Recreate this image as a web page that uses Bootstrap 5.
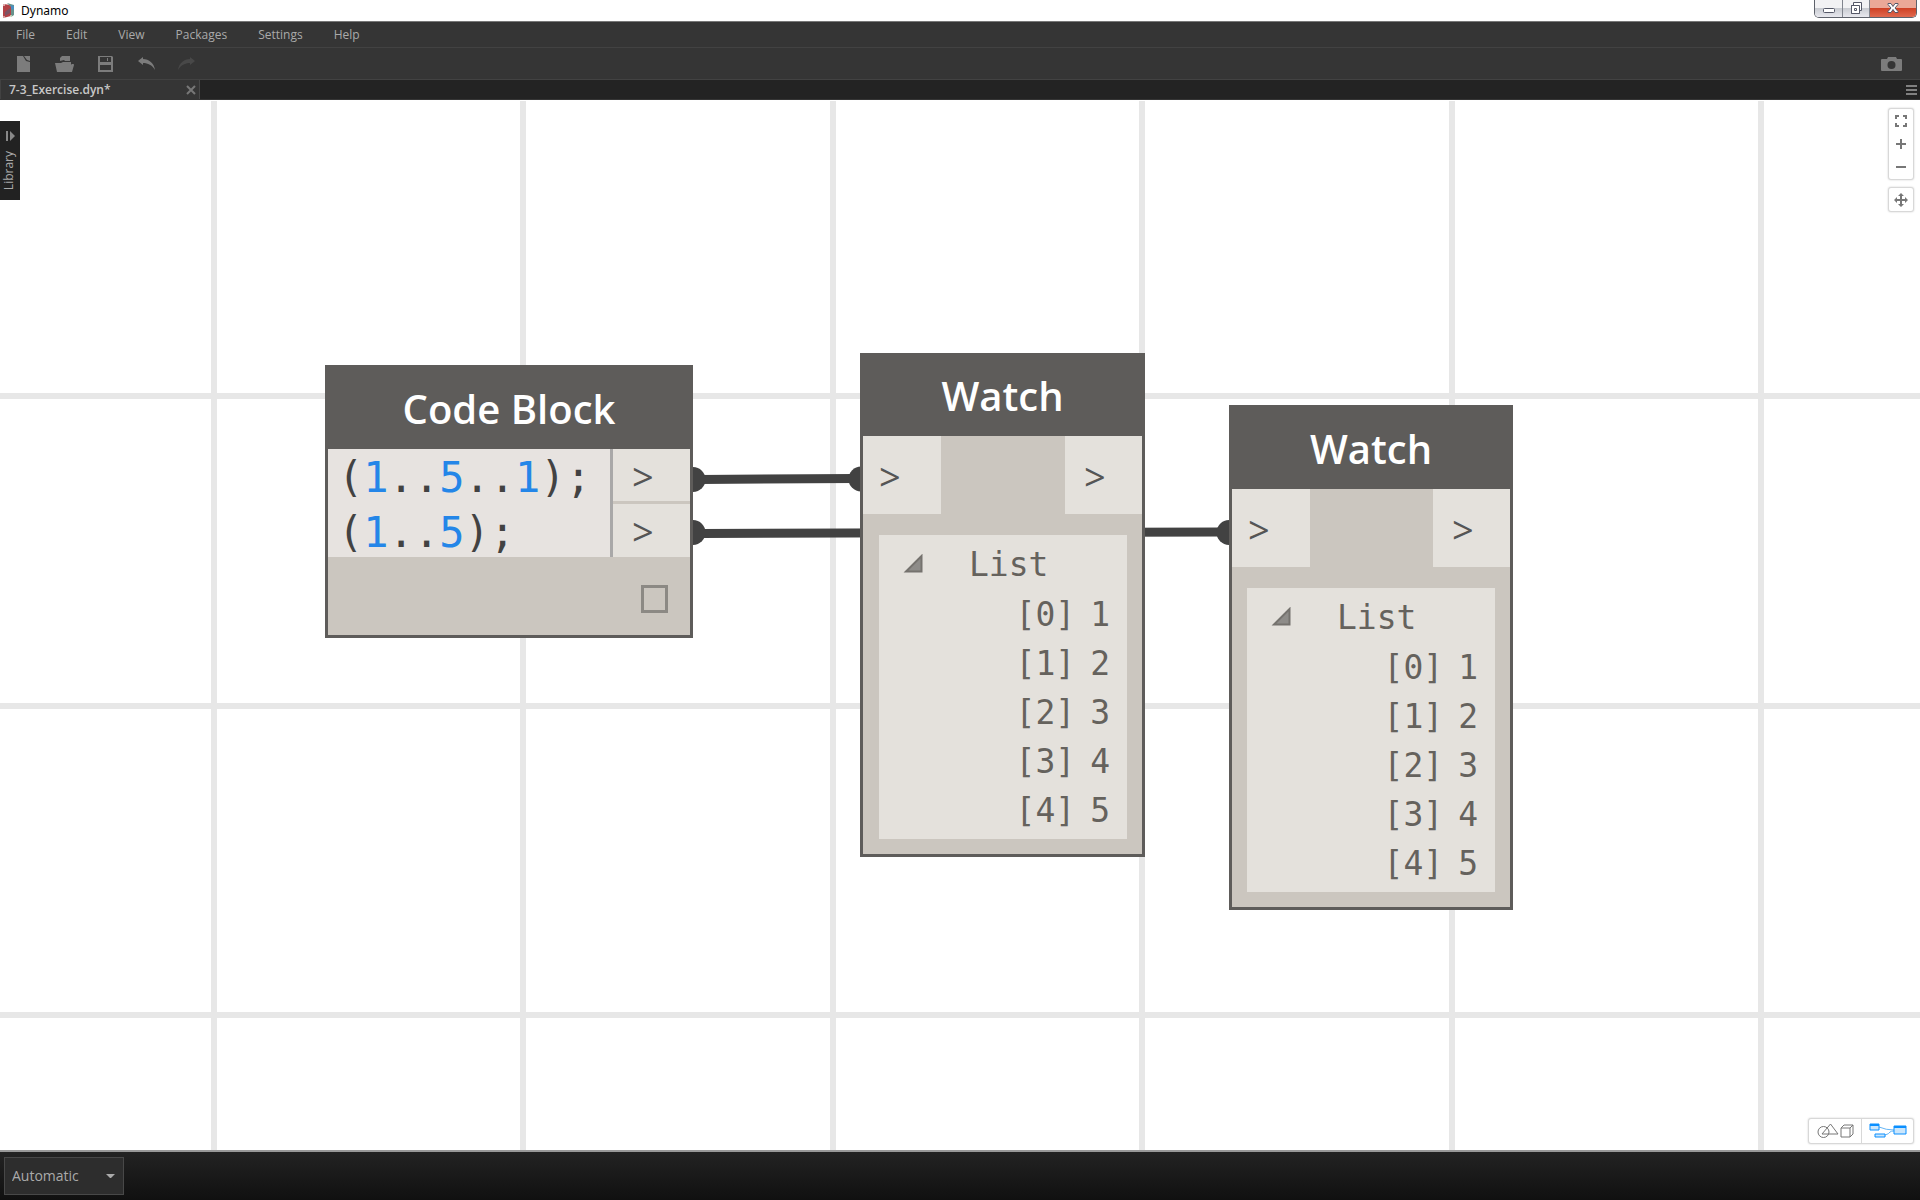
<!DOCTYPE html>
<html lang="en">
<head>
<meta charset="utf-8">
<meta name="viewport" content="width=device-width, initial-scale=1">
<title>Dynamo</title>
<link rel="stylesheet" href="https://cdn.jsdelivr.net/npm/bootstrap@5.3.0/dist/css/bootstrap.min.css">
<style>
body { font-family: "Open Sans", sans-serif; font-size: 12px; line-height: 16px; background: #fff; }
.app-title { height: 21px; font-family: "Noto Sans", sans-serif; color: #000; padding-left: 2px; }
.app-title h1 { font-size: 12px; line-height: 21px; }
.win-controls { height: 18px; margin-right: 3px; border: 1px solid #5e626b; border-top: 0; border-radius: 0 0 5px 5px; overflow: hidden; }
.win-controls button { border: 0; padding: 0; width: 27px; background: linear-gradient(#f2f2f4 45%, #c9ccd2 50%, #e8e8ee); }
.win-controls button + button { border-left: 1px solid #81858e; }
.win-controls .win-close { width: 47px; background: linear-gradient(#eba897 45%, #cf4226 50%, #e0694f); }
.menu-bar { height: 27px; background: #353535; border-top: 1px solid #777; border-bottom: 1px solid #424242; padding-left: 16px; gap: 31px; }
.menu-bar a { color: #aaa; text-decoration: none; }
.tool-bar { height: 31px; background: #353535; padding: 0 17px 0 16px; }
.tool-bar button, .flat-btn { background: none; border: 0; padding: 0; display: flex; align-items: center; justify-content: center; }
.tab-strip { height: 21px; background: #232323; border-top: 1px solid #424242; border-bottom: 1px solid #353535; padding-right: 3px; }
.file-tab { width: 200px; background: #353535; border-left: 1px solid #424242; border-right: 1px solid #484848; color: #c8c8c8; font-weight: 600; padding: 0 3px 0 8px; }
.workspace { min-height: 0; overflow: hidden; }
.canvas-art { position: absolute; inset: 0; width: 100%; height: 100%; }
.library-tab { position: absolute; left: 0; top: 21px; width: 20px; height: 79px; background: #222; color: #aaa; padding: 10px 2px 10px 0; }
.library-tab span { writing-mode: vertical-rl; transform: rotate(180deg); line-height: 18px; }
.node-box { position: absolute; background: #cbc6bf; border: 3px solid #5e5c5a; color: #fff; }
.node-title { background: #5e5c5a; height: 81px; font-size: 40px; font-weight: 600; line-height: 82px; text-align: center; margin: 0; }
.code-node { left: 325px; top: 265px; width: 368px; }
.watch-a { left: 860px; top: 253px; width: 285px; }
.watch-a .node-title { height: 80px; line-height: 80px; }
.watch-b { left: 1229px; top: 305px; width: 284px; }
.code-text { background: #e7e3e0; border-right: 3px solid #a9a8a8; font: 42px/55px "DejaVu Sans Mono", monospace; color: #424242; padding: 1px 0 0 10px; height: 108px; }
.code-text span { display: block; }
.code-text b { font-weight: 400; color: #2486e8; }
.out-ports { width: 77px; }
.port { background: #e4e1dc; color: #555; font-size: 38px; line-height: 54px; }
.out-ports .port { height: 52px; padding-left: 19px; }
.out-ports .port + .port { border-top: 3px solid #cbc6bf; height: 56px; }
.watch-ports .port { width: 78px; height: 78px; line-height: 80px; padding-left: 16px; }
.watch-ports .port-out { width: 77px; padding-left: 19px; }
.node-foot { height: 78px; padding: 28px 22px; }
.code-check { appearance: none; width: 27px; height: 28px; border: 3px solid #8c8984; margin: 0; display: block; }
.watch-list { background: #e4e1dc; margin: 21px 15px 15px 16px; height: 304px; padding: 5px 17px 0 24px; color: #65625d; font: 33px/50px "DejaVu Sans Mono", monospace; }
.watch-b .watch-list { margin-left: 15px; }
.watch-list li { display: flex; justify-content: flex-end; gap: 15px; line-height: 49px; }
.watch-head { gap: 46px; }
.watch-head svg { margin-bottom: 2px; }
.view-panel { background: #fff; border: 1px solid #d8d8d8; border-radius: 3px; box-shadow: 0 0 2px #ccc; }
.nav-panels { position: absolute; right: 6px; top: 8px; width: 26px; gap: 7px; }
.nav-panels .flat-btn { height: 23px; }
.zoom-panel { padding-bottom: 1px; }
.mode-panel { position: absolute; right: 6px; bottom: 6px; height: 26px; }
.mode-panel button { width: 52px; }
.mode-panel button + button { border-left: 1px solid #d8d8d8; }
.run-bar { height: 50px; border-top: 2px solid #999; background: linear-gradient(#232323, #101010); padding: 5px 4px; }
.run-field { width: 120px; }
.run-mode { width: 100%; height: 38px; border: 1px solid #484848; border-radius: 0; color: #aaa; font-size: 14px; padding: 0 8px 0 7px; background: #2d2d2d; appearance: none; }
.run-arrow { position: absolute; right: 9px; top: 17px; pointer-events: none; }
</style>
</head>
<body>
<div class="vh-100 d-flex flex-column">
<header>
  <div class="app-title d-flex">
    <svg width="15" height="20" viewBox="0 0 15 20" class="flex-shrink-0"><path d="M1 4l8 1v11l-8 2z" fill="#b34146"/><path d="M5 3l7 2v10l-3 2V7z" fill="#67928c"/><path d="M9 5l3 1v4l-3-1z" fill="#4a8fc0"/><path d="M3 12l5-4v5l-5 3z" fill="#7d5464"/><circle cx="2" cy="5" r="1" fill="#e8c8c8"/><circle cx="2" cy="17" r="1" fill="#ddb9b9"/><circle cx="9" cy="16" r="1" fill="#cfe0c0"/></svg>
    <h1 class="mb-0 ms-1 fw-normal">Dynamo</h1>
    <div class="win-controls d-flex ms-auto">
      <button aria-label="Minimize"><svg width="12" height="17" class="d-block mx-auto"><rect x=".5" y="8.500" width="11" height="4" rx="1" fill="#fff" stroke="#555868"/></svg></button>
      <button aria-label="Restore"><svg width="13" height="17" class="d-block mx-auto"><path d="M3.500 2.500h8v8h-2v3h-8v-8h2z" fill="#fff" stroke="#555868"/><path d="M1.500 5.500h8v8h-8zM4.500 8.500h2v2h-2z" fill="#fff" stroke="#555868"/></svg></button>
      <button class="win-close" aria-label="Close"><svg width="12" height="17" class="d-block mx-auto"><path d="M1 3.500h3l2 3 2-3h3v1L8 8l3 3.500v1H8l-2-3-2 3H1v-1L4 8 1 4.500z" fill="#fff" stroke="#565869"/></svg></button>
    </div>
  </div>
  <nav class="menu-bar d-flex align-items-center" aria-label="Main menu">
    <a href="#">File</a><a href="#">Edit</a><a href="#">View</a><a href="#">Packages</a><a href="#">Settings</a><a href="#">Help</a>
  </nav>
  <div class="tool-bar d-flex align-items-center">
    <div class="d-flex flex-grow-1">
      <button aria-label="New"><svg width="39" height="18" viewBox="0 0 39 18"><path d="M1 1h6l3 5 4 1v10H1z" fill="#7c7c7c"/><path d="M8 1h6v5l-3-1z" fill="#7c7c7c"/></svg></button>
      <button aria-label="Open"><svg width="43" height="18" viewBox="0 0 43 18"><path d="M5 6V3l2-2h8v5H10L9 5z" fill="#7c7c7c"/><path d="M0 8h6l2-1h8v3h3l-2 7H2zM16 9h3l-1 3z" fill="#7c7c7c"/></svg></button>
      <button aria-label="Save"><svg width="40" height="18" viewBox="0 0 40 18"><path d="M0 1h14l1 1v15H0zM2 2v5h11V2zM2 10v5h11v-5z" fill="#7c7c7c" fill-rule="evenodd"/><path d="M1 8h13v2H1zM9 3h1v3H9z" fill="#7c7c7c"/></svg></button>
      <button aria-label="Undo"><svg width="40" height="18" viewBox="0 0 40 18"><path d="M0 6l5-4v2c6 0 11 4 12 11-3-5-7-7-12-7v2z" fill="#7c7c7c"/></svg></button>
      <button aria-label="Redo"><svg width="18" height="18" viewBox="0 0 18 18"><path d="M17 6l-5-4v2C6 4 1 8 0 15c3-5 7-7 12-7v2z" fill="#484848"/></svg></button>
    </div>
    <button aria-label="Export image"><svg width="22" height="16" viewBox="0 0 22 16"><path d="M0 4q0-1 1-1h5l1-2h8l1 2h4q1 0 1 1v10q0 1-1 1H1q-1 0-1-1z" fill="#7c7c7c"/><circle cx="10.500" cy="9" r="4" fill="#353535"/></svg></button>
  </div>
  <div class="tab-strip d-flex align-items-center justify-content-between">
    <div class="file-tab d-flex align-items-center justify-content-between h-100">
      <span>7-3_Exercise.dyn*</span>
      <button class="flat-btn" aria-label="Close tab"><svg width="10" height="10"><path d="M1 1l8 8M9 1l-8 8" stroke="#777" stroke-width="2"/></svg></button>
    </div>
    <button class="flat-btn" aria-label="Tabs menu"><svg width="11" height="10"><path d="M0 1h11M0 5h11M0 9h11" stroke="#808080" stroke-width="2"/></svg></button>
  </div>
</header>

<main class="workspace position-relative flex-grow-1">
  <svg class="canvas-art" aria-hidden="true">
    <g fill="#e7e7e7">
      <rect x="211" y="1" width="6" height="100%"/><rect x="520" y="1" width="6" height="100%"/><rect x="830" y="1" width="6" height="100%"/><rect x="1139" y="1" width="6" height="100%"/><rect x="1449" y="1" width="6" height="100%"/><rect x="1758" y="1" width="6" height="100%"/>
      <rect x="0" y="293" width="100%" height="6"/><rect x="0" y="603" width="100%" height="6"/><rect x="0" y="912" width="100%" height="6"/>
    </g>
    <g stroke="#424242" stroke-width="9"><path d="M700 379.500L855 378.500M700 433.500L1225 432"/></g>
    <g fill="#424242"><circle cx="693" cy="379.500" r="12.500"/><circle cx="693" cy="432.500" r="12.500"/><circle cx="861" cy="379" r="12.500"/><circle cx="1229" cy="432.500" r="12.500"/></g>
  </svg>

  <section class="node-box code-node">
    <h2 class="node-title">Code Block</h2>
    <div class="d-flex">
      <div class="code-text flex-grow-1"><span>(<b>1</b>..<b>5</b>..<b>1</b>);</span><span>(<b>1</b>..<b>5</b>);</span></div>
      <div class="out-ports"><div class="port">&gt;</div><div class="port">&gt;</div></div>
    </div>
    <div class="node-foot d-flex justify-content-end"><input class="code-check" type="checkbox" aria-label="Node preview"></div>
  </section>

  <section class="node-box watch-a">
    <h2 class="node-title">Watch</h2>
    <div class="watch-ports d-flex justify-content-between"><div class="port">&gt;</div><div class="port port-out">&gt;</div></div>
    <div class="watch-list">
      <div class="watch-head d-flex align-items-center"><svg width="20" height="20"><path d="M3 17.500L18.500 2v15.500z" fill="#8e8c89" stroke="#75726e" stroke-width="2"/></svg><span>List</span></div>
      <ul class="list-unstyled mb-0"><li><span>[0]</span><span>1</span></li><li><span>[1]</span><span>2</span></li><li><span>[2]</span><span>3</span></li><li><span>[3]</span><span>4</span></li><li><span>[4]</span><span>5</span></li></ul>
    </div>
  </section>

  <section class="node-box watch-b">
    <h2 class="node-title">Watch</h2>
    <div class="watch-ports d-flex justify-content-between"><div class="port">&gt;</div><div class="port port-out">&gt;</div></div>
    <div class="watch-list">
      <div class="watch-head d-flex align-items-center"><svg width="20" height="20"><path d="M3 17.500L18.500 2v15.500z" fill="#8e8c89" stroke="#75726e" stroke-width="2"/></svg><span>List</span></div>
      <ul class="list-unstyled mb-0"><li><span>[0]</span><span>1</span></li><li><span>[1]</span><span>2</span></li><li><span>[2]</span><span>3</span></li><li><span>[3]</span><span>4</span></li><li><span>[4]</span><span>5</span></li></ul>
    </div>
  </section>

  <button class="library-tab border-0 d-flex flex-column align-items-center justify-content-between">
    <svg width="10" height="10" class="ms-1"><path d="M1 0v10" stroke="#888" stroke-width="2"/><path d="M4 0l5 5-5 5z" fill="#888"/></svg>
    <span>Library</span>
  </button>

  <div class="nav-panels d-flex flex-column">
    <div class="view-panel zoom-panel d-flex flex-column">
      <button class="flat-btn" aria-label="Fit to view"><svg width="12" height="12"><path d="M1 4V1h3M8 1h3v3M11 8v3H8M4 11H1V8" fill="none" stroke="#777" stroke-width="2"/></svg></button>
      <button class="flat-btn" aria-label="Zoom in"><svg width="10" height="10"><path d="M5 0v10M0 5h10" stroke="#777" stroke-width="2"/></svg></button>
      <button class="flat-btn" aria-label="Zoom out"><svg width="10" height="10"><path d="M0 5h10" stroke="#777" stroke-width="2"/></svg></button>
    </div>
    <div class="view-panel"><button class="flat-btn w-100" aria-label="Pan"><svg width="14" height="14"><path d="M7 1v12M1 7h12" stroke="#777" stroke-width="2"/><path d="M7 0l3 3H4zM7 14l3-3H4zM0 7l3-3v6zM14 7l-3-3v6z" fill="#777"/></svg></button></div>
  </div>

  <div class="mode-panel view-panel d-flex">
    <button class="flat-btn" aria-label="Geometry view"><svg width="38" height="18" fill="none" stroke="#777"><circle cx="7.500" cy="10" r="5.500"/><path d="M6 12L14.500 2 22 12zM25 6h9v9h-9zM25 6l3-3h9v9l-3 3M34 6l3-3"/></svg></button>
    <button class="flat-btn" aria-label="Graph view"><svg width="38" height="18" fill="#cbe6fb" stroke="#0a8fff"><path d="M10 5q7 3 15 3M16 13q4-1 5-3 1-1 4-1" fill="none" stroke="#65b5f5"/><path d="M1 2h9v6H1zM6 12h10v3H6zM25 4h12v8H25z"/><path d="M1 3h9M25 5h12" stroke-width="2"/></svg></button>
  </div>
</main>

<footer class="run-bar">
  <div class="run-field position-relative">
    <select class="run-mode d-block" aria-label="Run mode"><option>Automatic</option><option>Manual</option></select>
    <svg class="run-arrow" width="9" height="5"><path d="M0 0h9L5 4H4z" fill="#aaa"/></svg>
  </div>
</footer>
</div>
<script src="https://cdn.jsdelivr.net/npm/bootstrap@5.3.0/dist/js/bootstrap.bundle.min.js"></script>
</body>
</html>
